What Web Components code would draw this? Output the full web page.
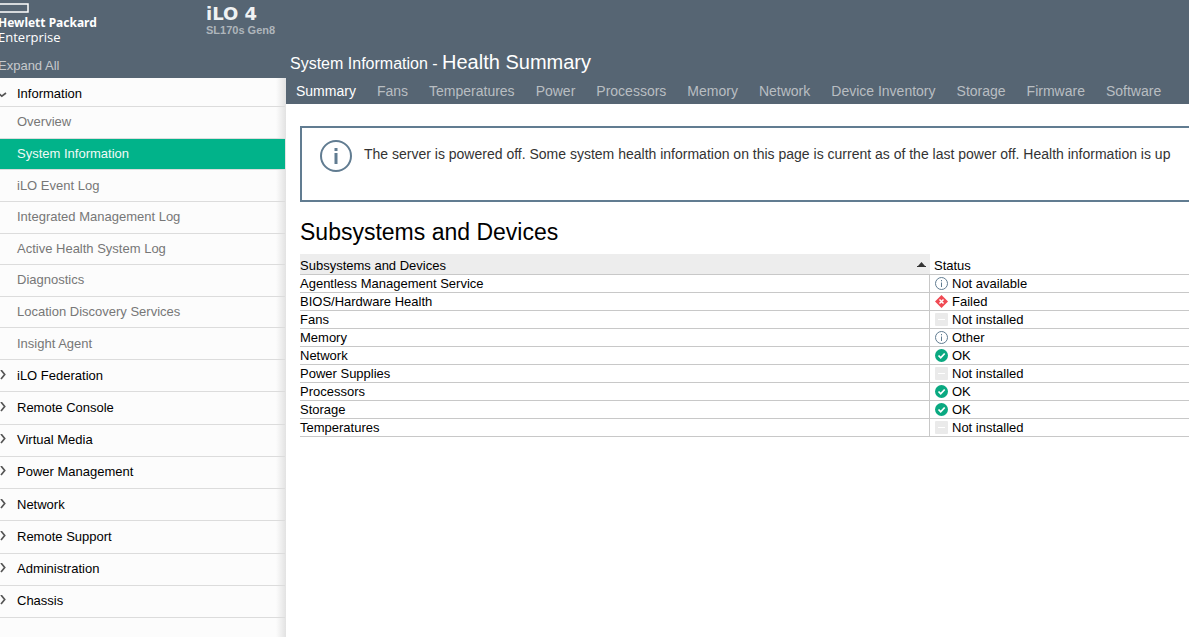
<!DOCTYPE html>
<html lang="en">
<head>
<meta charset="utf-8">
<title>iLO 4 - Health Summary</title>
<style>
html, body { margin: 0; height: 100%; }
body { font: 13px/16px "Liberation Sans", Arial, sans-serif; color: #000; background: #fff; overflow: hidden; }
</style>
</head>
<body>
<ilo-app></ilo-app>
<script>
const define = (name, html, setup) => customElements.define(name, class extends HTMLElement {
  connectedCallback() {
    if (this.shadowRoot) return;
    const t = document.createElement('template');
    t.innerHTML = html;
    const root = this.attachShadow({ mode: 'open' });
    root.append(t.content.cloneNode(true));
    if (setup) setup(this, root);
  }
});

const icons = {
  info: '<circle cx="6.500" cy="6.500" r="6" fill="#fff" stroke="#617c91"/><path d="M6.500 5.500v4.500M6.500 3v1.300" stroke="#617c91"/>',
  failed: '<path d="M6.500 0L13 6.500 6.500 13 0 6.500z" fill="#f04953"/><path d="M4.500 4.500l4 4M8.500 4.500l-4 4" stroke="#fff" stroke-width="1.500"/>',
  none: '<rect width="13" height="13" rx="1" fill="#eaeaea"/><path d="M3 6.500h7" stroke="#fff"/>',
  ok: '<circle cx="6.500" cy="6.500" r="6.500" fill="#0aa981"/><path d="M3.500 6.500l2.200 2.300 4-4.300" fill="none" stroke="#fff" stroke-width="1.800"/>'
};
define('status-icon', '<style>:host{display:block;width:13px;height:13px}svg{display:block}</style><svg width="13" height="13" viewBox="0 0 13 13" aria-hidden="true"></svg>',
  (el, root) => { root.querySelector('svg').innerHTML = icons[el.getAttribute('kind')]; });

define('nav-item', `<style>
:host{display:block}
a,button{display:flex;align-items:center;box-sizing:border-box;width:100%;height:100%;margin:0;padding:0 17px;border:0;border-bottom:1px solid #dcdcdc;background:none;color:#777;font:inherit;text-align:left;text-decoration:none}
button{color:#000;padding-left:0;gap:10px}
:host([open]) button{padding-top:4px}
:host([current]) a{background:#01b38a;color:#f0faf7}
svg{flex:none}
</style>`, (el, root) => {
  const group = el.hasAttribute('group'), open = el.hasAttribute('open');
  const control = document.createElement(group ? 'button' : 'a');
  if (group) {
    control.type = 'button';
    control.setAttribute('aria-expanded', open);
    control.innerHTML = `<svg width="7" height="12" viewBox="0 0 7 12" fill="none" stroke="#555" stroke-width="1.700" aria-hidden="true"><path d="${open ? 'M-2 5L1.800 8.200 6 5' : 'M1 0l3.700 4.500L1 9'}"/></svg>`;
  } else {
    control.href = '#';
    if (el.hasAttribute('current')) control.setAttribute('aria-current', 'page');
  }
  control.append(document.createElement('slot'));
  root.append(control);
});

define('hpe-brand', `<style>
:host{display:block;width:206px;color:#fff;overflow:hidden}
svg{display:block;margin:3px 0}
b,span{display:block;margin-left:-2px;line-height:14px;white-space:nowrap}
b{font-family:"Noto Sans",sans-serif;font-size:12px}
span{font-family:"Open Sans",sans-serif;font-size:13px}
</style><svg width="29" height="10" aria-hidden="true"><path d="M-2 1H28V9H-2" fill="none" stroke="#fff" stroke-width="1.500"/></svg><b>Hewlett Packard</b><span>Enterprise</span>`);

define('side-nav', `<style>
:host{display:flex;flex-direction:column;box-sizing:border-box;width:286px;flex:none;background:linear-gradient(90deg,#fcfcfc calc(100% - 10px),#e2e2e2)}
header{display:flex;height:58px;background:#566573}
.product{padding-top:5px}
h1{margin:0;font:bold 18px/18px "DejaVu Sans",sans-serif;color:#f0f2f3}
p{margin:0;font-size:11px;line-height:14px;font-weight:bold;color:#aeb5bb}
.expand{background:#566573;height:20px;display:flex;align-items:flex-start}
.expand button{border:0;margin:0 0 0 -2px;padding:0;background:none;font:inherit;color:#c6c9cc}
nav{padding-right:1px}
ul{list-style:none;margin:0;padding:0;display:grid;grid-auto-rows:1fr}
.top{height:29px}
.sub{min-height:253px}.groups{min-height:258px}
</style>
<header><hpe-brand></hpe-brand><div class="product"><h1>iLO 4</h1><p>SL170s Gen8</p></div></header>
<div class="expand"><button type="button">Expand All</button></div>
<nav aria-label="Main">
<nav-item class="top" group open>Information</nav-item>
<div role="list"><ul class="sub"></ul><ul class="groups"></ul></div></nav>`, (el, root) => {
  const add = (sel, items, attr) => {
    root.querySelector(sel).innerHTML = items.map(x => `<li><nav-item style="height:100%" ${attr} ${x === 'System Information' ? 'current' : ''}>${x}</nav-item></li>`).join('');
  };
  add('.sub', ['Overview', 'System Information', 'iLO Event Log', 'Integrated Management Log', 'Active Health System Log', 'Diagnostics', 'Location Discovery Services', 'Insight Agent'], '');
  add('.groups', ['iLO Federation', 'Remote Console', 'Virtual Media', 'Power Management', 'Network', 'Remote Support', 'Administration', 'Chassis'], 'group');
});

define('page-header', `<style>
:host{display:block;background:#566573;color:#fff;padding-top:50px;height:54px;white-space:nowrap;overflow:hidden}
h2{margin:0 4px;font-size:16px;line-height:24px;font-weight:normal}
h2 span{font-size:20px}
nav{display:flex;gap:21px;padding:6px 10px 0}
a{color:#b9bec2;text-decoration:none;font-size:14px;line-height:18px}
a[aria-current]{color:#fff}
</style><h2>System Information - <span>Health Summary</span></h2><nav aria-label="Sections"></nav>`, (el, root) => {
  root.querySelector('nav').innerHTML = ['Summary', 'Fans', 'Temperatures', 'Power', 'Processors', 'Memory', 'Network', 'Device Inventory', 'Storage', 'Firmware', 'Software']
    .map((x, i) => `<a href="#"${i ? '' : ' aria-current="page"'}>${x}</a>`).join('');
});

define('info-banner', `<style>
:host{display:flex;gap:12px;padding:12px 0 28px 18px;border:2px solid #617c91;border-right:0;overflow:hidden}
svg{flex:none}
p{margin:0;padding-top:5px;font-size:14px;line-height:18px;color:#333;white-space:nowrap}
</style><svg width="32" height="32" viewBox="0 0 32 32" aria-hidden="true"><circle cx="16" cy="16" r="15" fill="none" stroke="#617c91" stroke-width="2"/><path d="M16 13v11M16 8v3" stroke="#617c91" stroke-width="3"/></svg><p><slot></slot></p>`);

define('health-table', `<style>
:host{display:block}
table{width:100%;border-collapse:separate;border-spacing:0;table-layout:fixed}
col:first-child{width:630px}
th,td{box-sizing:border-box;padding:0;border-bottom:1px solid #c8c8c8;font-weight:normal;text-align:left;height:18px}
th{height:21px;padding-top:4px}
th:first-child{background:#ededed}
th:last-child{padding-left:4px}
td:first-child{border-right:1px solid #c8c8c8}
td:last-child{padding-left:5px}
th button{display:flex;justify-content:space-between;width:100%;border:0;padding:0 4px 0 0;background:none;font:inherit;color:inherit}
.s{display:flex;align-items:center;gap:4px}
</style><table><colgroup><col><col></colgroup><thead><tr><th scope="col" aria-sort="ascending"><button type="button">Subsystems and Devices<svg width="9" height="12" aria-hidden="true"><path d="M4.500 4L8 8H1zM0 8H9V9H0z" fill="#333"/></svg></button></th><th scope="col">Status</th></tr></thead><tbody></tbody></table>`, (el, root) => {
  const rows = [['Agentless Management Service', 'info', 'Not available'], ['BIOS/Hardware Health', 'failed', 'Failed'], ['Fans', 'none', 'Not installed'], ['Memory', 'info', 'Other'], ['Network', 'ok', 'OK'], ['Power Supplies', 'none', 'Not installed'], ['Processors', 'ok', 'OK'], ['Storage', 'ok', 'OK'], ['Temperatures', 'none', 'Not installed']];
  root.querySelector('tbody').innerHTML = rows.map(([n, k, s]) => `<tr><td>${n}</td><td><div class="s"><status-icon kind="${k}"></status-icon>${s}</div></td></tr>`).join('');
});

define('ilo-app', `<style>
:host{display:flex;min-height:100%}
.page{flex:1;min-width:0}
main{padding:22px 0 0 14px}
h3{margin:16px 0 8px;font-size:23px;line-height:28px;font-weight:normal}
</style><side-nav></side-nav><div class="page"><page-header></page-header><main>
<info-banner>The server is powered off. Some system health information on this page is current as of the last power off. Health information is up</info-banner>
<h3>Subsystems and Devices</h3><health-table></health-table></main></div>`);
</script>
</body>
</html>
